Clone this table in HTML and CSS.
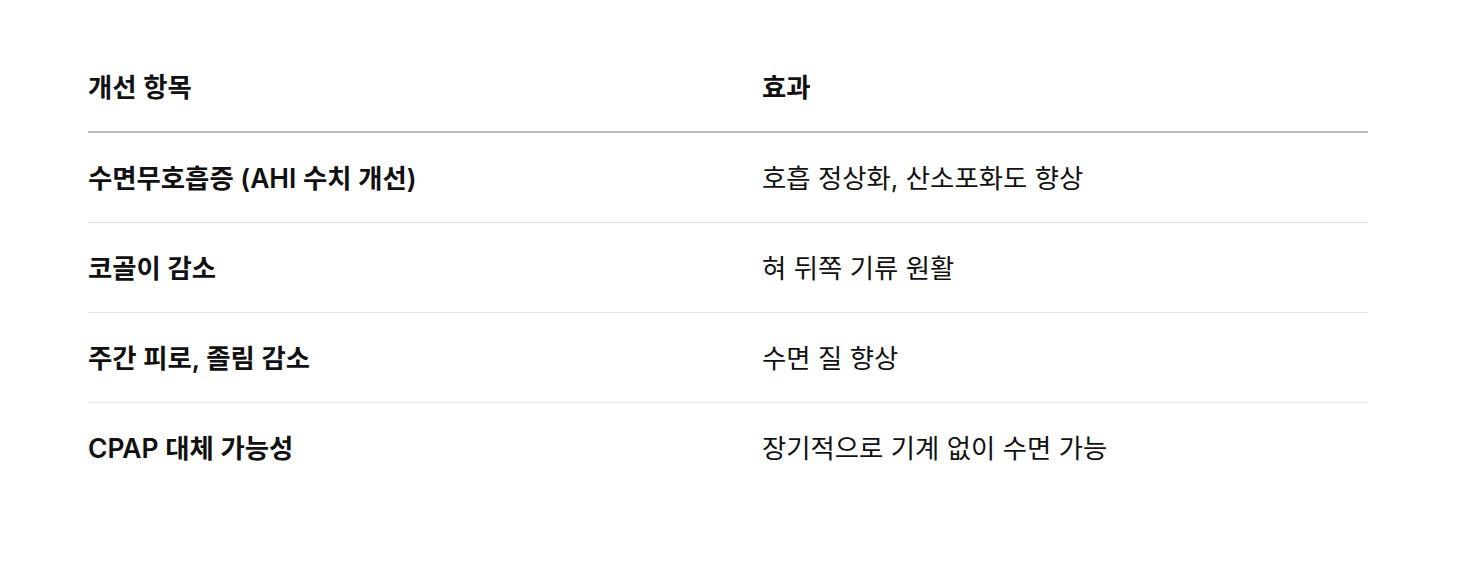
FILE: index.html
```html
<!DOCTYPE html>
<html lang="ko">
<head>
<meta charset="utf-8">
<link rel="stylesheet" href="styles.css">
</head>
<body>
<div class="page">
  <table class="effects">
    <thead>
      <tr><th class="col-item">개선 항목</th><th>효과</th></tr>
    </thead>
    <tbody>
      <tr><td class="item">수면무호흡증 (AHI 수치 개선)</td><td>호흡 정상화, 산소포화도 향상</td></tr>
      <tr><td class="item">코골이 감소</td><td>혀 뒤쪽 기류 원활</td></tr>
      <tr><td class="item">주간 피로, 졸림 감소</td><td>수면 질 향상</td></tr>
      <tr><td class="item">CPAP 대체 가능성</td><td>장기적으로 기계 없이 수면 가능</td></tr>
    </tbody>
  </table>
</div>
</body>
</html>
```

FILE: styles.css
```css
html, body {
  margin: 0;
  background: #ffffff;
}
.page {
  padding: 43px 93px 0 88px;
  font-family: Inter, "Noto Sans CJK KR", sans-serif;
  color: #111111;
}
.effects {
  width: 1280px;
  border-collapse: collapse;
  font-size: 26.4px;
  line-height: 36px;
}
.effects th {
  text-align: left;
  font-weight: 600;
  height: 88px;
  padding: 0;
  vertical-align: middle;
  border-bottom: 2px solid #bcbcbc;
}
.col-item {
  width: 674px;
}
.effects td {
  height: 89px;
  padding: 0;
  vertical-align: middle;
  border-bottom: 1px solid #e3e3e3;
  font-weight: 400;
}
.effects td.item {
  font-weight: 600;
}
.effects tbody tr:last-child td {
  border-bottom: none;
}
```
